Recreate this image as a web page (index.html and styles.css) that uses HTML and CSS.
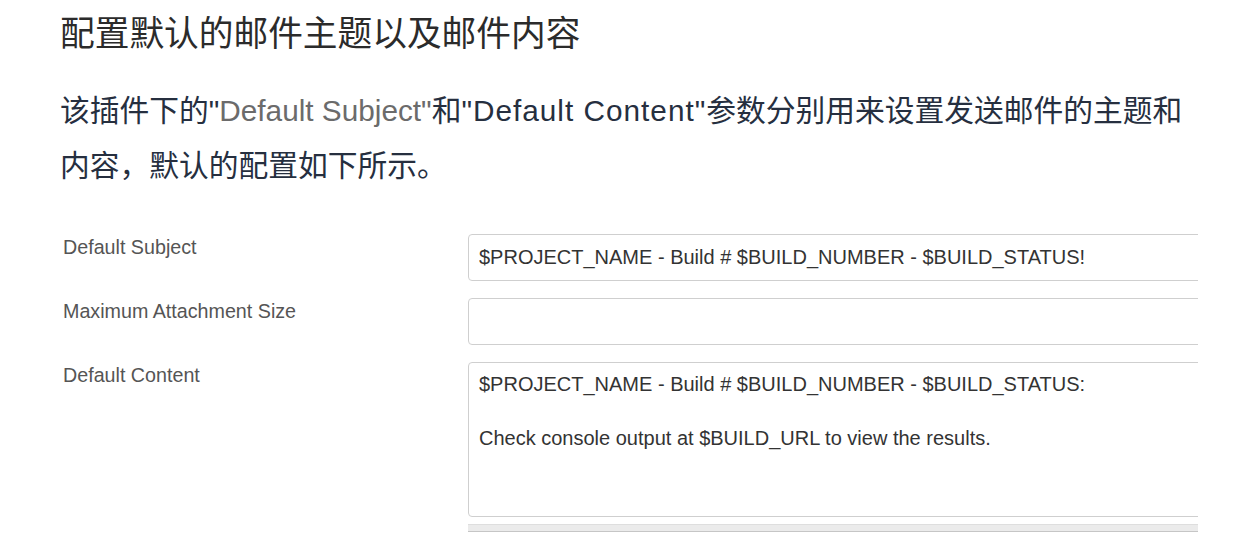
FILE: index.html
```html
<!DOCTYPE html>
<html lang="zh-CN">
<head>
<meta charset="utf-8">
<title>邮件配置</title>
<link rel="stylesheet" href="styles.css">
</head>
<body>
<div class="page">
  <h1 class="title">配置默认的邮件主题以及邮件内容</h1>
  <p class="desc">该插件下的"<span class="muted">Default Subject"</span>和<span class="wide">"Default Content"</span>参数分别用来设置发送邮件的主题和内容，默认的配置如下所示。</p>
  <div class="form">
    <div class="label">Default Subject</div>
    <div class="field"><input class="control" type="text" value="$PROJECT_NAME - Build # $BUILD_NUMBER - $BUILD_STATUS!"></div>
    <div class="label">Maximum Attachment Size</div>
    <div class="field"><input class="control" type="text" value=""></div>
    <div class="label">Default Content</div>
    <div class="field">
      <textarea class="control area">$PROJECT_NAME - Build # $BUILD_NUMBER - $BUILD_STATUS:

Check console output at $BUILD_URL to view the results.</textarea>
      <div class="bar"></div>
    </div>
  </div>
</div>
</body>
</html>
```

FILE: styles.css
```css
html, body {
  margin: 0;
  padding: 0;
  background: #ffffff;
}

.page {
  padding: 10px 0 0 60px;
  font-family: "Liberation Sans", "Noto Sans CJK SC", sans-serif;
}

.title {
  margin: 0;
  font-size: 34.7px;
  line-height: 49px;
  font-weight: 400;
  color: #2b2b2b;
}

.desc {
  margin: 24px 0 0 0;
  width: 1135px;
  font-size: 29.75px;
  line-height: 55px;
  color: #262f3f;
}

.muted {
  color: #6b6b6b;
}

.wide {
  letter-spacing: 1px;
}

.form {
  margin: 41px 0 0 3px;
  width: 1135px;
  display: grid;
  grid-template-columns: 405px 1fr;
  row-gap: 17px;
  font-family: "Liberation Sans", Arial, sans-serif;
}

.label {
  font-size: 19.7px;
  line-height: 27px;
  color: #555555;
}

.field {
  overflow: hidden;
}

.control {
  display: block;
  box-sizing: border-box;
  width: calc(100% + 20px);
  height: 47px;
  margin: 0;
  padding: 0 10px;
  border: 1px solid #cfcfcf;
  border-radius: 4px;
  background: #ffffff;
  font-family: "Liberation Sans", Arial, sans-serif;
  font-size: 20px;
  line-height: 27px;
  color: #333333;
  outline: none;
}

.area {
  height: 155px;
  padding: 8px 10px;
  resize: none;
  overflow: hidden;
  white-space: pre-wrap;
}

.bar {
  margin-top: 7px;
  height: 6px;
  background: #ebebeb;
  border-top: 1px solid #dedede;
  border-bottom: 1px solid #c6c6c6;
}
```
